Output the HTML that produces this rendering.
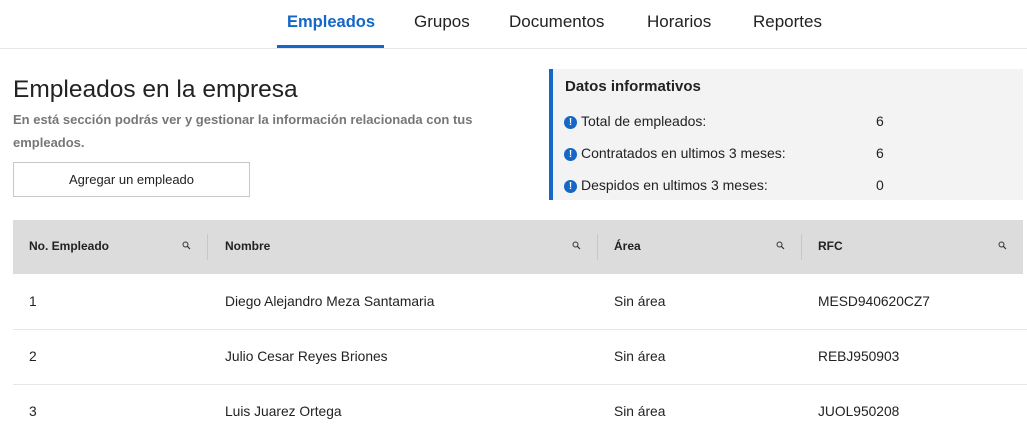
<!DOCTYPE html>
<html><head><meta charset="utf-8"><style>
*{margin:0;padding:0;box-sizing:border-box}
body{width:1027px;height:430px;overflow:hidden;background:#fff;font-family:"Liberation Sans",sans-serif;color:#222;position:relative}
.a{position:absolute;white-space:nowrap}
.nav{font-size:17px;top:12px;font-weight:500;color:#222}
.ic{display:inline-block;width:13px;height:13px;border-radius:50%;background:#1466c7;color:#fff;font-size:10px;font-weight:bold;text-align:center;line-height:13px;vertical-align:middle;position:relative;top:0px;margin-right:4px}
.th{font-size:12px;font-weight:bold;top:239px}
.td{font-size:13.8px}
.inf{font-size:14px}
.sep{position:absolute;left:13px;width:1014px;height:1px;background:#e6e6e6}
.vd{position:absolute;top:234px;width:1px;height:26px;background:#c8c8c8}
</style></head><body>
<div class="a nav" style="left:287px;color:#1466c7;font-weight:bold;font-size:16.5px;top:13px">Empleados</div>
<div class="a nav" style="left:414px">Grupos</div>
<div class="a nav" style="left:509px">Documentos</div>
<div class="a nav" style="left:647px">Horarios</div>
<div class="a nav" style="left:753px">Reportes</div>
<div style="position:absolute;left:0;top:48px;width:1027px;height:1px;background:#e6e6e6"></div>
<div style="position:absolute;left:277px;top:45px;width:107px;height:3px;background:#1466c7"></div>

<div class="a" style="left:13px;top:76px;font-size:24.5px;color:#222">Empleados en la empresa</div>
<div class="a" style="left:13px;top:108px;font-size:13px;font-weight:bold;color:#777;line-height:23px;white-space:normal;width:480px">En está sección podrás ver y gestionar la información relacionada con tus empleados.</div>
<div style="position:absolute;left:13px;top:162px;width:237px;height:35px;border:1px solid #c8c8c8;font-size:13px;text-align:center;line-height:33px">Agregar un empleado</div>

<div style="position:absolute;left:549px;top:69px;width:474px;height:131px;background:#f3f3f3;border-left:4px solid #1466c7"></div>
<div class="a" style="left:565px;top:78px;font-size:15px;font-weight:bold">Datos informativos</div>
<div class="a inf" style="left:564px;top:113px"><span class="ic">!</span>Total de empleados:</div>
<div class="a inf" style="left:564px;top:145px"><span class="ic">!</span>Contratados en ultimos 3 meses:</div>
<div class="a inf" style="left:564px;top:177px"><span class="ic">!</span>Despidos en ultimos 3 meses:</div>
<div class="a inf" style="left:876px;top:113px">6</div>
<div class="a inf" style="left:876px;top:145px">6</div>
<div class="a inf" style="left:876px;top:177px">0</div>

<div style="position:absolute;left:13px;top:220px;width:1010px;height:54px;background:#dcdcdc"></div>
<div class="a th" style="left:29px">No. Empleado</div>
<div class="a th" style="left:225px">Nombre</div>
<div class="a th" style="left:614px">Área</div>
<div class="a th" style="left:818px">RFC</div>
<div class="vd" style="left:207px"></div><div class="vd" style="left:597px"></div><div class="vd" style="left:801px"></div>
<svg class="a" style="left:182px;top:241px" width="9" height="9"><circle cx="3.5" cy="3.5" r="2.5" fill="none" stroke="#333" stroke-width="1"/><line x1="5.3" y1="5.3" x2="8" y2="8" stroke="#333" stroke-width="1.2"/></svg>
<svg class="a" style="left:572px;top:241px" width="9" height="9"><circle cx="3.5" cy="3.5" r="2.5" fill="none" stroke="#333" stroke-width="1"/><line x1="5.3" y1="5.3" x2="8" y2="8" stroke="#333" stroke-width="1.2"/></svg>
<svg class="a" style="left:776px;top:241px" width="9" height="9"><circle cx="3.5" cy="3.5" r="2.5" fill="none" stroke="#333" stroke-width="1"/><line x1="5.3" y1="5.3" x2="8" y2="8" stroke="#333" stroke-width="1.2"/></svg>
<svg class="a" style="left:998px;top:241px" width="9" height="9"><circle cx="3.5" cy="3.5" r="2.5" fill="none" stroke="#333" stroke-width="1"/><line x1="5.3" y1="5.3" x2="8" y2="8" stroke="#333" stroke-width="1.2"/></svg>

<div class="a td" style="left:29px;top:294px">1</div>
<div class="a td" style="left:225px;top:294px">Diego Alejandro Meza Santamaria</div>
<div class="a td" style="left:614px;top:294px">Sin área</div>
<div class="a td" style="left:818px;top:294px">MESD940620CZ7</div>
<div class="sep" style="top:329px"></div>
<div class="a td" style="left:29px;top:349px">2</div>
<div class="a td" style="left:225px;top:349px">Julio Cesar Reyes Briones</div>
<div class="a td" style="left:614px;top:349px">Sin área</div>
<div class="a td" style="left:818px;top:349px">REBJ950903</div>
<div class="sep" style="top:384px"></div>
<div class="a td" style="left:29px;top:404px">3</div>
<div class="a td" style="left:225px;top:404px">Luis Juarez Ortega</div>
<div class="a td" style="left:614px;top:404px">Sin área</div>
<div class="a td" style="left:818px;top:404px">JUOL950208</div>
</body></html>
